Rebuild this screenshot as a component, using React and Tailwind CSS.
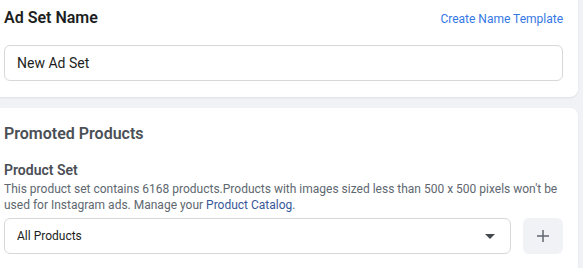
import React from 'react';

const App = () => {
  return (
    <div className="w-[583px] h-[268px] overflow-hidden bg-[#f0f2f5] font-['Roboto',_'Liberation_Sans',_sans-serif]">
      <div className="w-[578px] bg-white rounded-br-lg shadow-[0_1px_2px_rgba(0,0,0,0.08)] pl-1 pr-[15px] pt-2 pb-4">
        <div className="flex items-baseline justify-between h-5">
          <h2 className="text-[16px] leading-5 font-semibold text-[#1c1e21]">Ad Set Name</h2>
          <a className="text-[12px] leading-4 text-[#3578e5]">Create Name Template</a>
        </div>
        <div className="mt-[17px] h-9 rounded-md border border-[#d6d8db] flex items-center px-3">
          <span className="text-[14px] text-[#1c1e21]">New Ad Set</span>
        </div>
      </div>

      <div className="mt-[11px] w-[578px] h-[200px] bg-white rounded-tr-lg shadow-[0_1px_2px_rgba(0,0,0,0.08)] pl-1 pr-[15px] pt-4">
        <h2 className="text-[16px] leading-5 font-semibold text-[#4b4f56]">Promoted Products</h2>
        <h3 className="mt-[17px] text-[14px] leading-[18px] font-semibold text-[#4b4f56]">Product Set</h3>
        <p className="mt-[2px] text-[12px] leading-4 text-[#606770]">
          This product set contains 6168 products.Products with images sized less than 500 x 500 pixels won't be used for Instagram ads. Manage your{' '}
          <a className="text-[#385898]">Product Catalog</a>.
        </p>
        <div className="mt-[5px] flex items-center gap-3">
          <div className="flex-1 h-9 rounded-md border border-[#d6d8db] flex items-center justify-between pl-3 pr-[15px]">
            <span className="text-[12px] text-[#1c1e21]">All Products</span>
            <svg width="10" height="5" viewBox="0 0 10 5">
              <path d="M0 0h10L5 5z" fill="#444950" />
            </svg>
          </div>
          <button className="w-10 h-9 rounded-md bg-[#f0f2f5] flex items-center justify-center">
            <svg width="12" height="12" viewBox="0 0 12 12">
              <path d="M6 0v12M0 6h12" stroke="#606770" strokeWidth="1.5" />
            </svg>
          </button>
        </div>
      </div>
    </div>
  );
};

export default App;
